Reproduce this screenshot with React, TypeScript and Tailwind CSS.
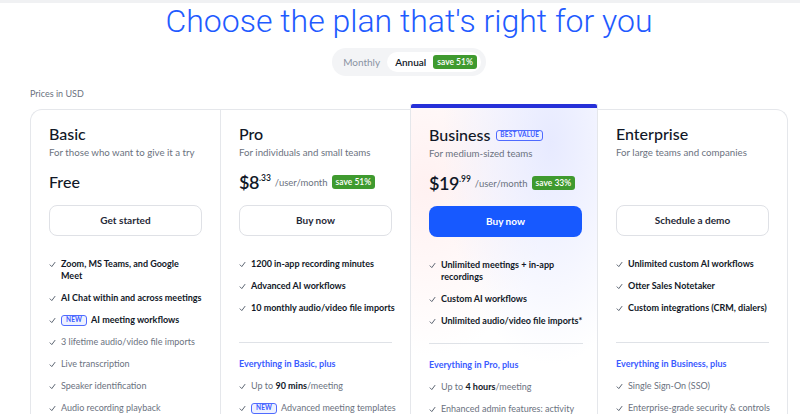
import React from "react";

const Check = () => (
  <svg viewBox="0 0 10 10" className="w-[7px] h-[7px] shrink-0 mt-[3px] text-[#4b5563]" fill="none" stroke="currentColor" strokeWidth="1.3" strokeLinecap="round" strokeLinejoin="round">
    <path d="M1.5 5.5 L4 8 L8.5 2" />
  </svg>
);

const NewTag = () => (
  <span className="inline-flex items-center h-[11px] px-[4px] mr-[4px] rounded-[3px] border border-[#4f6bff] bg-[#eef1ff] text-[#3b5bff] text-[6.5px] font-bold tracking-wide leading-none align-middle">
    NEW
  </span>
);

const Badge = ({ children }: { children: React.ReactNode }) => (
  <span className="inline-flex items-center h-[14px] px-[4px] rounded-[3px] bg-[#3f9a2f] text-white text-[8.5px] font-semibold leading-none">
    {children}
  </span>
);

type Feature = { text: React.ReactNode; bold?: boolean; isNew?: boolean };

const FeatureList = ({ items }: { items: Feature[] }) => (
  <ul className="flex flex-col gap-[10px] -mr-[10px]">
    {items.map((f, i) => (
      <li key={i} className="flex gap-[5px] items-start">
        <Check />
        <span className={`text-[9px] leading-[12px] ${f.bold ? "font-bold text-[#111827]" : "text-[#6b7280]"}`}>
          {f.isNew && <NewTag />}
          {f.text}
        </span>
      </li>
    ))}
  </ul>
);

const Price = ({ dollars, cents, save }: { dollars: string; cents: string; save: string }) => (
  <div className="flex items-center h-[24px] gap-[4px]">
    <span className="flex items-start text-[#111827] font-semibold leading-none">
      <span className="text-[18px] tracking-tight">{dollars}</span>
      <span className="text-[8.5px] mt-[1px]">{cents}</span>
    </span>
    <span className="text-[9.5px] text-[#6b7280] mt-[3px]">/user/month</span>
    <Badge>{save}</Badge>
  </div>
);

type CardProps = {
  title: string;
  subtitle: string;
  price: React.ReactNode;
  button: string;
  primary?: boolean;
  best?: boolean;
  features: Feature[];
  plusTitle?: string;
  plus?: Feature[];
  className?: string;
};

const Card = ({ title, subtitle, price, button, primary, best, features, plusTitle, plus, className }: CardProps) => (
  <div className={`w-[190px] shrink-0 border-[#e5e7eb] px-[18px] ${className ?? ""}`}>
    <div className="flex items-center gap-[6px] h-[20px]">
      <span className="text-[16px] font-medium text-[#111827] leading-none">{title}</span>
      {best && (
        <span className="inline-flex items-center h-[11px] px-[3px] rounded-[3px] border border-[#4f6bff] text-[#3b5bff] text-[6.5px] font-bold tracking-wide leading-none">
          BEST VALUE
        </span>
      )}
    </div>
    <div className="text-[9.7px] text-[#6b7280] mt-[2px] leading-[12px]">{subtitle}</div>
    <div className="mt-[12px] h-[24px]">{price}</div>
    <button
      className={`mt-[11px] w-[153px] h-[31px] rounded-[8px] text-[10px] font-bold ${
        primary ? "bg-[#1759ff] text-white" : "bg-white border border-[#dfe1e6] text-[#1f2937]"
      }`}
    >
      {button}
    </button>
    <div className={`mt-[22px] ${plusTitle ? "h-[84px]" : ""}`}>
      <FeatureList items={features} />
    </div>
    {plusTitle && (
      <>
        <div className="h-px bg-[#dfe2e7]" />
        <div className="mt-[15px] text-[9px] leading-[12px] font-bold text-[#3b5bff]">{plusTitle}</div>
        <div className="mt-[10px]">
          <FeatureList items={plus ?? []} />
        </div>
      </>
    )}
  </div>
);

export default function App() {
  return (
    <div className="w-full h-[414px] overflow-hidden bg-white" style={{ fontFamily: "Lato, 'Noto Sans', sans-serif" }}>
      <div className="h-[3px] bg-[#f0f1f3]" />
      <h1
        className="text-center text-[32px] font-light text-[#1f5bff] leading-[36px] pl-[18px]"
        style={{ fontFamily: "Roboto, sans-serif" }}
      >
        Choose the plan that's right for you
      </h1>
      <div className="flex justify-center mt-[9px] pl-[18px]">
        <div className="flex items-center h-[28px] rounded-full bg-[#f3f4f6] pl-[11px] pr-[5px] gap-[7px]">
          <span className="text-[10px] text-[#8a93a3]">Monthly</span>
          <span className="flex items-center gap-[7px] h-[20px] rounded-full bg-white pl-[8px] pr-[4px] text-[10px] font-semibold text-[#111827]">
            Annual
            <Badge>save 51%</Badge>
          </span>
        </div>
      </div>
      <div className="ml-[30px] mt-[12px] text-[9px] text-[#6b7280] leading-[12px]">Prices in USD</div>
      <div className="ml-[30px] mt-[9px] flex items-start">
        <Card
          className="border-l border-t rounded-tl-[12px] pt-[14px] h-[320px]"
          title="Basic"
          subtitle="For those who want to give it a try"
          price={<div className="h-[24px] flex items-center text-[16px] font-medium text-[#111827]">Free</div>}
          button="Get started"
          features={[
            { text: <>Zoom, MS Teams, and Google<br />Meet</>, bold: true },
            { text: "AI Chat within and across meetings", bold: true },
            { text: "AI meeting workflows", bold: true, isNew: true },
            { text: "3 lifetime audio/video file imports" },
            { text: "Live transcription" },
            { text: "Speaker identification" },
            { text: "Audio recording playback" },
          ]}
        />
        <Card
          className="border-l border-t pt-[14px] h-[320px]"
          title="Pro"
          subtitle="For individuals and small teams"
          price={<Price dollars="$8" cents=".33" save="save 51%" />}
          button="Buy now"
          features={[
            { text: "1200 in-app recording minutes", bold: true },
            { text: "Advanced AI workflows", bold: true },
            { text: "10 monthly audio/video file imports", bold: true },
          ]}
          plusTitle="Everything in Basic, plus"
          plus={[
            { text: <>Up to <b className="text-[#111827]">90 mins</b>/meeting</> },
            { text: "Advanced meeting templates", isNew: true },
          ]}
        />
        <div className="-mt-[5px] w-[188px] shrink-0 border-x border-[#e5e7eb] bg-[radial-gradient(ellipse_at_75%_12%,#e7eaff_0%,rgba(255,255,255,0)_55%),radial-gradient(ellipse_at_8%_25%,#fff1f1_0%,rgba(255,255,255,0)_50%)]">
          <div className="h-[4px] bg-[#2630d8] rounded-t-[2px]" />
          <Card
            className="pt-[17px] w-[186px] h-[320px] px-[17px]"
            title="Business"
            best
            subtitle="For medium-sized teams"
            price={<Price dollars="$19" cents=".99" save="save 33%" />}
            button="Buy now"
            primary
            features={[
              { text: <>Unlimited meetings + in-app<br />recordings</>, bold: true },
              { text: "Custom AI workflows", bold: true },
              { text: "Unlimited audio/video file imports*", bold: true },
            ]}
            plusTitle="Everything in Pro, plus"
            plus={[
              { text: <>Up to <b className="text-[#111827]">4 hours</b>/meeting</> },
              { text: <>Enhanced admin features: activity<br />dashboard</> },
            ]}
          />
        </div>
        <Card
          className="border-r border-t rounded-tr-[12px] pt-[14px] h-[320px]"
          title="Enterprise"
          subtitle="For large teams and companies"
          price={<div className="h-[24px]" />}
          button="Schedule a demo"
          features={[
            { text: "Unlimited custom AI workflows", bold: true },
            { text: "Otter Sales Notetaker", bold: true },
            { text: "Custom integrations (CRM, dialers)", bold: true },
          ]}
          plusTitle="Everything in Business, plus"
          plus={[
            { text: "Single Sign-On (SSO)" },
            { text: "Enterprise-grade security & controls" },
          ]}
        />
      </div>
    </div>
  );
}
